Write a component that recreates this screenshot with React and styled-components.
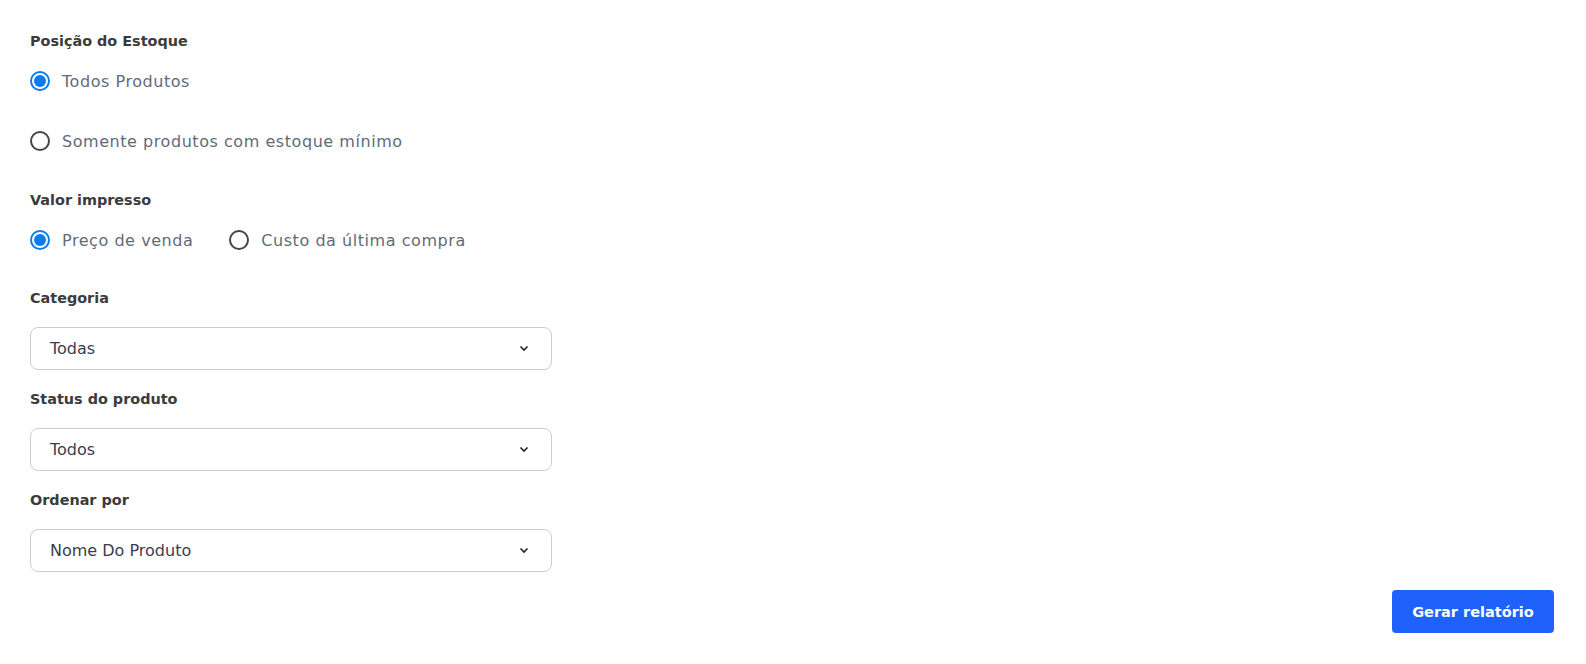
import React, { useState } from "react";
import styled, { createGlobalStyle } from "styled-components";

const GlobalStyle = createGlobalStyle`
  body {
    margin: 0;
    background: #ffffff;
    font-family: "DejaVu Sans", "Open Sans", sans-serif;
  }
`;

const Page = styled.div`
  padding: 30px 32px 30px 30px;
  display: flex;
  flex-direction: column;
`;

const Section = styled.div`
  display: flex;
  flex-direction: column;
  margin-bottom: ${(p) => p.$after}px;
`;

const FieldLabel = styled.div`
  height: 22px;
  line-height: 22px;
  font-size: 14.4px;
  font-weight: 700;
  color: #3b3b3b;
  margin-bottom: ${(p) => p.$gap}px;
`;

const RadioGroup = styled.div`
  display: flex;
  flex-direction: ${(p) => (p.$inline ? "row" : "column")};
  gap: ${(p) => (p.$inline ? "36px" : "20px")};
`;

const RadioItem = styled.label`
  display: flex;
  align-items: center;
  height: 40px;
  gap: 12px;
  cursor: pointer;
  font-size: 16px;
  letter-spacing: 0.55px;
  color: #5f6b78;
`;

const Circle = styled.span`
  width: 20px;
  height: 20px;
  box-sizing: border-box;
  border-radius: 50%;
  border: 2px solid ${(p) => (p.$on ? "#0b7cf0" : "#454545")};
  display: flex;
  align-items: center;
  justify-content: center;
  flex-shrink: 0;

  &::after {
    content: "";
    width: 12px;
    height: 12px;
    border-radius: 50%;
    background: #0b7cf0;
    display: ${(p) => (p.$on ? "block" : "none")};
  }
`;

const SelectBox = styled.div`
  width: 522px;
  height: 43px;
  box-sizing: border-box;
  border: 1px solid #cdcdcd;
  border-radius: 8px;
  padding: 0 22px 0 19px;
  display: flex;
  align-items: center;
  justify-content: space-between;
  font-size: 16px;
  color: #3a3d4f;
  margin-bottom: 18px;
`;

const Footer = styled.div`
  display: flex;
  justify-content: flex-end;
`;

const Button = styled.button`
  width: 162px;
  height: 43px;
  border: 0;
  border-radius: 4px;
  background: #1f62fb;
  color: #ffffff;
  font-family: inherit;
  font-size: 14.5px;
  font-weight: 700;
  cursor: pointer;
`;

const Chevron = () => (
  <svg width="10" height="7" viewBox="0 0 10 7">
    <path d="M1.5 1.5 L5 5 L8.5 1.5" fill="none" stroke="#222" strokeWidth="1.6" />
  </svg>
);

const Radio = ({ checked, label, onSelect }) => (
  <RadioItem onClick={onSelect}>
    <Circle $on={checked} />
    {label}
  </RadioItem>
);

const SelectField = ({ label, value }) => (
  <>
    <FieldLabel $gap={18}>{label}</FieldLabel>
    <SelectBox>
      {value}
      <Chevron />
    </SelectBox>
  </>
);

export default function App() {
  const [posicao, setPosicao] = useState("todos");
  const [valor, setValor] = useState("venda");

  return (
    <Page>
      <GlobalStyle />
      <Section $after={28}>
        <FieldLabel $gap={9}>Posição do Estoque</FieldLabel>
        <RadioGroup>
          <Radio
            checked={posicao === "todos"}
            label="Todos Produtos"
            onSelect={() => setPosicao("todos")}
          />
          <Radio
            checked={posicao === "minimo"}
            label="Somente produtos com estoque mínimo"
            onSelect={() => setPosicao("minimo")}
          />
        </RadioGroup>
      </Section>
      <Section $after={27}>
        <FieldLabel $gap={9}>Valor impresso</FieldLabel>
        <RadioGroup $inline>
          <Radio
            checked={valor === "venda"}
            label="Preço de venda"
            onSelect={() => setValor("venda")}
          />
          <Radio
            checked={valor === "custo"}
            label="Custo da última compra"
            onSelect={() => setValor("custo")}
          />
        </RadioGroup>
      </Section>
      <Section>
        <SelectField label="Categoria" value="Todas" />
        <SelectField label="Status do produto" value="Todos" />
        <SelectField label="Ordenar por" value="Nome Do Produto" />
      </Section>
      <Footer>
        <Button>Gerar relatório</Button>
      </Footer>
    </Page>
  );
}
